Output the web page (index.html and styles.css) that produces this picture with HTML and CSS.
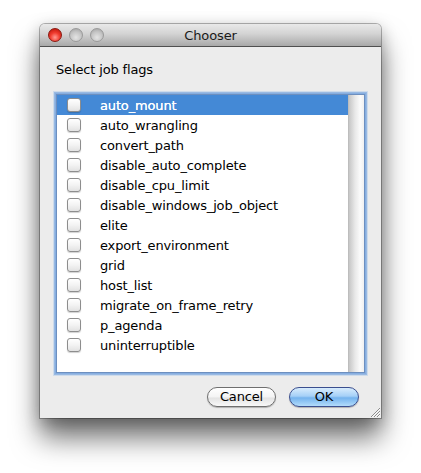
FILE: index.html
```html
<!DOCTYPE html>
<html>
<head>
<meta charset="utf-8">
<link rel="stylesheet" href="styles.css">
</head>
<body>
<div class="stage">
  <div class="window">
    <div class="titlebar">
      <div class="lights">
        <span class="light red"></span>
        <span class="light gray"></span>
        <span class="light gray"></span>
      </div>
      <div class="title">Chooser</div>
    </div>
    <div class="content">
      <div class="label">Select job flags</div>
      <div class="listbox">
        <div class="rows">
          <div class="row selected"><span class="cb"></span><span class="name">auto_mount</span></div>
          <div class="row"><span class="cb"></span><span class="name">auto_wrangling</span></div>
          <div class="row"><span class="cb"></span><span class="name">convert_path</span></div>
          <div class="row"><span class="cb"></span><span class="name">disable_auto_complete</span></div>
          <div class="row"><span class="cb"></span><span class="name">disable_cpu_limit</span></div>
          <div class="row"><span class="cb"></span><span class="name">disable_windows_job_object</span></div>
          <div class="row"><span class="cb"></span><span class="name">elite</span></div>
          <div class="row"><span class="cb"></span><span class="name">export_environment</span></div>
          <div class="row"><span class="cb"></span><span class="name">grid</span></div>
          <div class="row"><span class="cb"></span><span class="name">host_list</span></div>
          <div class="row"><span class="cb"></span><span class="name">migrate_on_frame_retry</span></div>
          <div class="row"><span class="cb"></span><span class="name">p_agenda</span></div>
          <div class="row"><span class="cb"></span><span class="name">uninterruptible</span></div>
        </div>
        <div class="scrolltrack"></div>
      </div>
      <div class="buttons">
        <button class="btn cancel">Cancel</button>
        <button class="btn ok">OK</button>
      </div>
      <svg class="grip" width="10" height="10" viewBox="0 0 10 10">
        <path d="M1 10 L10 1 M4 10 L10 4 M7 10 L10 7" stroke="#8c8c8c" stroke-width="1" fill="none"/>
        <path d="M2 10 L10 2 M5 10 L10 5 M8 10 L10 8" stroke="#ffffff" stroke-width="0.8" fill="none"/>
      </svg>
    </div>
  </div>
</div>
</body>
</html>
```
FILE: styles.css
```css
html, body {
  margin: 0;
  padding: 0;
  background: #ffffff;
}
body {
  font-family: "DejaVu Sans", "Liberation Sans", sans-serif;
  font-size: 13px;
  color: #000;
  min-height: 473px;
}
.stage {
  padding: 24px 0 60px 40px;
}
.window {
  width: 341px;
  height: 394px;
  display: flex;
  flex-direction: column;
  border-radius: 5px 5px 0 0;
  box-shadow: 0 0 0 1px rgba(0,0,0,0.28), 0 20px 28px rgba(0,0,0,0.55), 0 4px 16px rgba(0,0,0,0.25);
  background: #ececec;
}
.titlebar {
  height: 22px;
  border-bottom: 1px solid #4f4f4f;
  background: linear-gradient(#e9e9e9, #d3d3d3 45%, #a8a8a8);
  border-radius: 5px 5px 0 0;
  display: flex;
  align-items: center;
  position: relative;
}
.lights {
  display: flex;
  gap: 7px;
  padding-left: 8px;
  position: absolute;
  left: 0;
  top: 4px;
}
.light {
  width: 14px;
  height: 14px;
  border-radius: 50%;
  box-sizing: border-box;
}
.light.red {
  background: radial-gradient(circle at 50% 70%, #ff9b93 0%, #f13c2f 45%, #b10d02 100%);
  border: 1px solid #8a1a12;
}
.light.gray {
  background: radial-gradient(circle at 50% 70%, #e4e4e4 0%, #c4c4c4 55%, #9d9d9d 100%);
  border: 1px solid #9a9a9a;
}
.title {
  flex: 1;
  text-align: center;
  font-size: 13px;
  letter-spacing: -0.1px;
  color: #1a1a1a;
  line-height: 22px;
  padding-top: 2px;
}
.content {
  flex: 1;
  display: flex;
  flex-direction: column;
  padding: 0 16px;
  position: relative;
}
.label {
  margin-top: 15px;
  line-height: 16px;
  height: 16px;
  margin-bottom: 16px;
  letter-spacing: -0.15px;
}
.listbox {
  width: 309px;
  height: 279px;
  box-sizing: border-box;
  border: 1px solid #6d8fbf;
  background: #ffffff;
  box-shadow: 0 0 0 1px #86aee0, 0 0 0 2px rgba(118,162,220,0.6), 0 0 0 3px rgba(150,188,235,0.35);
  display: flex;
}
.rows {
  flex: 1;
  display: flex;
  flex-direction: column;
}
.row {
  height: 20px;
  display: flex;
  align-items: center;
  padding-left: 10px;
  letter-spacing: -0.15px;
}
.row.selected {
  background: #4489d6;
  color: #ffffff;
}
.row.selected .name {
  text-shadow: 0 0 0.5px #fff;
}
.cb {
  width: 14px;
  height: 14px;
  box-sizing: border-box;
  border: 1px solid #8d8d8d;
  border-radius: 3px;
  background: linear-gradient(#ffffff, #f3f3f3 50%, #e2e2e2);
  box-shadow: 0 1px 1px rgba(0,0,0,0.18);
  margin-right: 19px;
}
.scrolltrack {
  width: 15px;
  background: linear-gradient(to right, #c6c6c6, #e8e8e8 40%, #fbfbfb 75%, #f0f0f0);
  border-left: 1px solid #bdbdbd;
}
.buttons {
  display: flex;
  justify-content: flex-end;
  gap: 13px;
  margin-top: 14px;
  padding-right: 6px;
}
.btn {
  font-family: "DejaVu Sans", "Liberation Sans", sans-serif;
  font-size: 13px;
  letter-spacing: -0.15px;
  height: 20px;
  border-radius: 10px;
  padding: 0;
  line-height: 18px;
  box-sizing: border-box;
  color: #000;
}
.btn.cancel {
  width: 69px;
  border: 1px solid #6f6f6f;
  background: linear-gradient(#ffffff, #f4f4f4 50%, #e3e3e3 55%, #f8f8f8);
  box-shadow: 0 1px 1px rgba(0,0,0,0.25);
}
.btn.ok {
  width: 70px;
  border: 1px solid #3b4f8f;
  background: linear-gradient(#d8ecfd, #a5d0f7 45%, #74b3ee 55%, #b3dcfb);
  box-shadow: 0 1px 1px rgba(0,0,0,0.25);
}
.grip {
  position: absolute;
  right: 1px;
  bottom: 1px;
}
```
